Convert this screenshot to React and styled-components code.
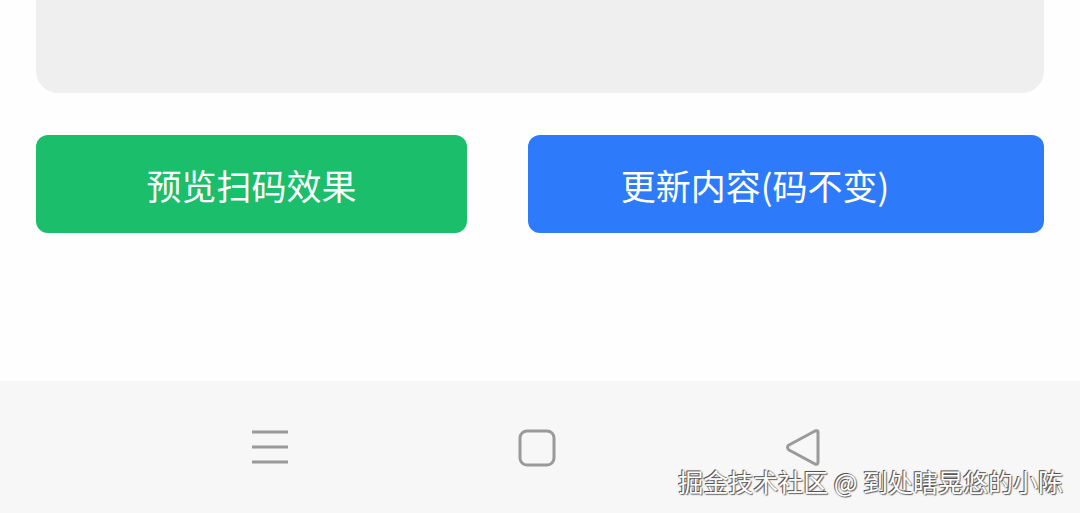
import React from 'react';
import styled, { createGlobalStyle } from 'styled-components';

const Global = createGlobalStyle`
  html, body {
    margin: 0;
    padding: 0;
    background: #fefefe;
    font-family: "Noto Sans CJK SC", "Noto Sans", sans-serif;
  }
`;

const Screen = styled.div`
  width: 1080px;
  height: 513px;
  display: flex;
  flex-direction: column;
  overflow: hidden;
  background: #fefefe;
`;

const Content = styled.div`
  flex: 1;
  padding: 0 36px;
  display: flex;
  flex-direction: column;
`;

const Card = styled.div`
  height: 93px;
  background: #efefef;
  border-radius: 0 0 22px 22px;
`;

const Actions = styled.div`
  margin-top: 42px;
  display: flex;
  gap: 61px;
`;

const Btn = styled.button`
  height: 98px;
  width: ${p => p.$w}px;
  border: none;
  border-radius: 12px;
  background: ${p => p.$bg};
  color: #fff;
  font-family: "Noto Sans CJK SC", sans-serif;
  font-size: 35px;
  font-weight: 400;
  padding: 0 ${p => p.$pr || 0}px 0 0;
  display: flex;
  align-items: center;
  justify-content: center;
`;

const NavBar = styled.div`
  height: 132px;
  background: #f7f7f7;
  position: relative;
  padding-top: 48px;
  box-sizing: border-box;
`;

const IconRow = styled.div`
  display: flex;
  width: 100%;
`;

const Slot = styled.div`
  width: ${p => p.$w}px;
  flex: none;
  display: flex;
`;

const NavIcon = styled.svg`
  width: 40px;
  height: 40px;
  flex: none;
`;

const Watermark = styled.div`
  position: absolute;
  right: 17px;
  bottom: 14px;
  font-family: "Noto Sans CJK SC", sans-serif;
  font-size: 25px;
  color: #fff;
  text-shadow: -1px -1px 0 #555, 1px 1px 1px #666, 0 0 2px #777;
`;

export default function App() {
  return (
    <Screen>
      <Global />
      <Content>
        <Card />
        <Actions>
          <Btn $w={431} $bg="#1bbe6a">预览扫码效果</Btn>
          <Btn $w={516} $bg="#2d7bfa" $pr={62}>更新内容(码不变)</Btn>
        </Actions>
      </Content>
      <NavBar>
        <IconRow>
          <Slot $w={250}></Slot>
          <Slot $w={268}>
            <NavIcon viewBox="0 0 40 40">
              <g stroke="#9a9a9a" strokeWidth="3">
                <line x1="2" y1="3" x2="38" y2="3" />
                <line x1="2" y1="18" x2="38" y2="18" />
                <line x1="2" y1="33" x2="38" y2="33" />
              </g>
            </NavIcon>
          </Slot>
          <Slot $w={266}>
            <NavIcon viewBox="0 0 40 40">
              <rect x="2" y="2" width="34" height="34" rx="7" fill="none" stroke="#9a9a9a" strokeWidth="3" />
            </NavIcon>
          </Slot>
          <Slot $w={60}>
            <NavIcon viewBox="0 0 40 40">
              <path d="M34 3 L34 33 Q34 36 31 35 L5 21 Q2 18 5 16 L31 2 Q34 1 34 3 Z" fill="none" stroke="#9a9a9a" strokeWidth="3" strokeLinejoin="round" />
            </NavIcon>
          </Slot>
        </IconRow>
        <Watermark>掘金技术社区 @ 到处瞎晃悠的小陈</Watermark>
      </NavBar>
    </Screen>
  );
}
